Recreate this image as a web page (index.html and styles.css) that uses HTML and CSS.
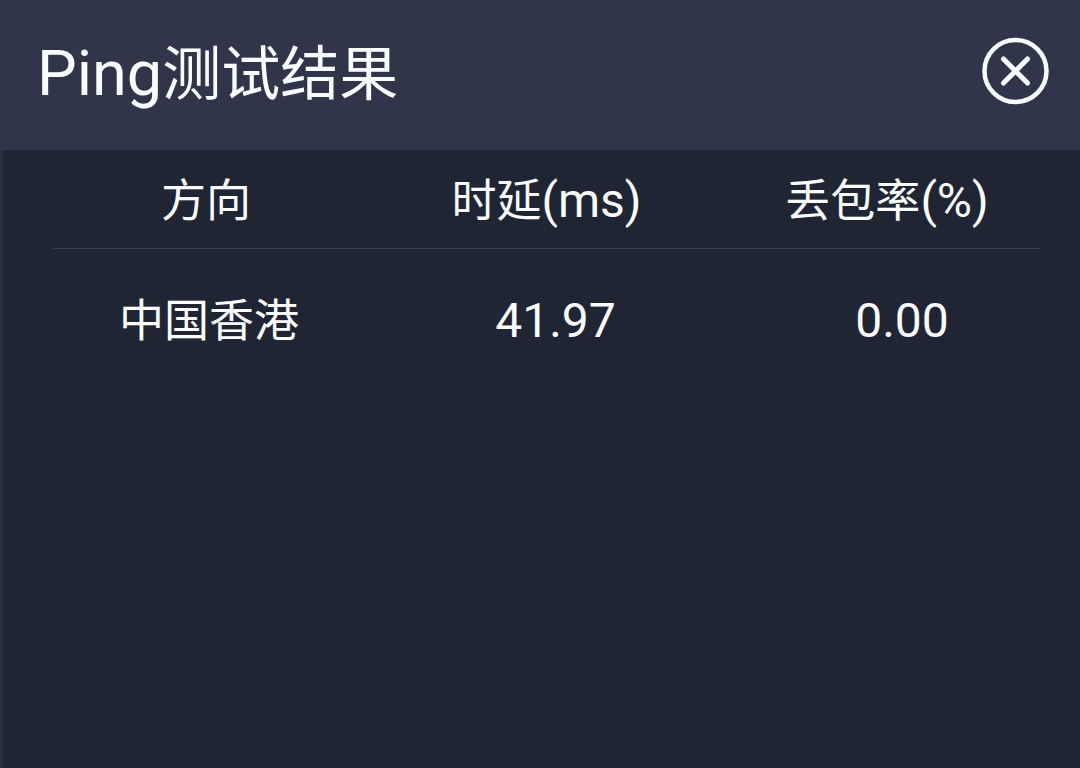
FILE: index.html
```html
<!DOCTYPE html>
<html lang="zh-CN">
<head>
<meta charset="utf-8">
<meta name="viewport" content="width=device-width, initial-scale=1">
<title>Ping测试结果</title>
<link rel="stylesheet" href="styles.css">
</head>
<body>
<main class="dialog">
  <header class="dialog-header">
    <h1 class="dialog-title"><span class="title-latin">Ping</span>测试结果</h1>
    <button class="close" type="button" aria-label="关闭">
      <svg class="close-icon" viewBox="0 0 68 68" aria-hidden="true">
        <circle cx="33.5" cy="34" r="31" fill="none" stroke="currentColor" stroke-width="4.5"/>
        <path d="M21.5 22L45.5 46M45.5 22L21.5 46" fill="none" stroke="currentColor" stroke-width="5" stroke-linecap="round"/>
      </svg>
    </button>
  </header>
  <section class="dialog-body">
    <table class="results">
      <thead>
        <tr>
          <th class="direction" scope="col">方向</th>
          <th class="latency" scope="col">时延<span class="latin">(ms)</span></th>
          <th class="loss" scope="col">丢包率<span class="latin">(%)</span></th>
        </tr>
      </thead>
      <tbody>
        <tr>
          <td class="direction">中国香港</td>
          <td class="latency"><span class="latin">41.97</span></td>
          <td class="loss"><span class="latin">0.00</span></td>
        </tr>
      </tbody>
    </table>
  </section>
</main>
</body>
</html>
```
FILE: styles.css
```css
body {
  margin: 0;
  color: #fafcff;
  background: #202533;
  font-family: Roboto, "Noto Sans CJK SC", sans-serif;
}

.dialog {
  display: flex;
  flex-direction: column;
  box-sizing: border-box;
  min-height: 100vh;
}

.dialog-header {
  display: flex;
  align-items: flex-start;
  justify-content: space-between;
  padding: 30px 30px 31px 37px;
  background: #303549;
}

.dialog-title {
  margin: 0;
  font-size: 59px;
  font-weight: 400;
  line-height: 88px;
}

.title-latin {
  font-size: 63px;
}

.latin {
  font-size: 48px;
}

.close {
  display: flex;
  margin-top: 7px;
  padding: 0;
  border: 0;
  color: inherit;
  background: none;
  cursor: pointer;
}

.close-icon {
  width: 68px;
  height: 68px;
}

.dialog-body {
  flex: 1;
  padding: 0 40px 0 50px;
  border-left: 3px solid #2b3144;
}

.results {
  width: 100%;
  border-collapse: collapse;
  table-layout: fixed;
}

.results th {
  padding: 18px 0 13px;
  border-bottom: 1px solid #3c414e;
  font-size: 45px;
  font-weight: 400;
  line-height: 66px;
}

.results th.direction,
.results th.loss {
  width: 31%;
}

.results td {
  padding: 39px 0;
  font-size: 45px;
  line-height: 66px;
  text-align: center;
}

.results td.direction {
  padding-left: 6px;
}

.results td.latency {
  padding-left: 18px;
}

.results td.loss {
  padding-left: 30px;
}
```
